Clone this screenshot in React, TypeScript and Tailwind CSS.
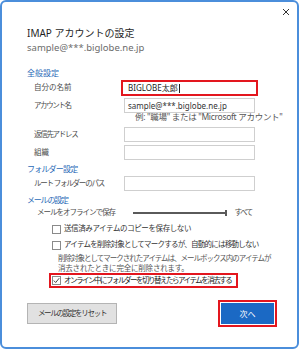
import { ReactNode } from "react"

// IMAP account settings dialog

const font = "font-['Noto_Sans','Noto_Sans_CJK_JP',sans-serif]"

function Row({ label, children, className = "", labelClass = "tracking-[-1px]" }: { label: string; children: ReactNode; className?: string; labelClass?: string }) {
  return (
    <div className={`flex items-center ${className}`}>
      <div className={`w-[97px] shrink-0 pl-[7px] text-[7.5px] text-[#4d4d4d] leading-none whitespace-nowrap ${labelClass}`}>{label}</div>
      {children}
    </div>
  )
}

function Input({ value = "" }: { value?: string }) {
  return (
    <div className="w-[131px] h-full border border-[#cfcfcf] bg-white flex items-center px-[3px] text-[8px] text-[#333] leading-none">
      {value}
    </div>
  )
}

function Section({ children, className = "" }: { children: ReactNode; className?: string }) {
  return <div className={`h-[14px] flex items-center text-[8px] text-[#2a6ab7] leading-none ${className}`}>{children}</div>
}

function Check({ checked = false }: { checked?: boolean }) {
  return (
    <span className="w-[9px] h-[9px] border border-[#8a8a8a] bg-white flex items-center justify-center shrink-0">
      {checked && (
        <svg width="7" height="7" viewBox="0 0 7 7">
          <path d="M0.8 3.6 L2.7 5.5 L6.2 1.2" fill="none" stroke="#333" strokeWidth="0.9" />
        </svg>
      )}
    </span>
  )
}

export default function App() {
  return (
    <div className={`w-[300px] h-[351px] bg-white ${font}`}>
      <div className="w-[299px] h-[349px] border-2 border-[#4b8edb] rounded-[6px] relative pl-[25px] pt-[23px]">
        {/* close */}
        <svg className="absolute top-[6px] right-[7px]" width="8" height="8" viewBox="0 0 8 8">
          <path d="M1 1 L7 7 M7 1 L1 7" stroke="#333" strokeWidth="1" />
        </svg>

        <div className="h-[16px] flex items-center text-[10px] text-[#1f1f1f] leading-none">
          IMAP アカウントの設定
        </div>
        <div className="h-[13px] flex items-center text-[9.5px] text-[#6b6b6b] leading-none">sample@***.biglobe.ne.jp</div>

        <Section className="mt-[12px]">全般設定</Section>
        <Row label="自分の名前" className="h-[16px]" labelClass="">
          <div className="-ml-[3px] w-[137px] h-full border-2 border-[#e3161e] bg-white flex items-center px-[5px] text-[8px] text-[#222] leading-none">
            BIGLOBE太郎<span className="w-px h-[9px] bg-[#222] ml-px" />
          </div>
        </Row>
        <Row label="アカウント名" className="h-[15px] mt-[2px]" labelClass="tracking-[-1.4px]">
          <Input value="sample@***.biglobe.ne.jp" />
        </Row>
        <div className="h-[9px] pl-[108px] flex items-center text-[8.5px] text-[#555] leading-none whitespace-nowrap tracking-[-0.3px]">
          例: "職場" または "Microsoft アカウント"
        </div>
        <Row label="返信先アドレス" className="h-[15px] mt-[5px]" labelClass="tracking-[-1.3px]">
          <Input />
        </Row>
        <Row label="組織" className="h-[15px] mt-[3px]" labelClass="">
          <Input />
        </Row>

        <Section className="mt-[2px] tracking-[-0.8px]">フォルダー設定</Section>
        <Row label="ルート フォルダーのパス" className="h-[15px]" labelClass="tracking-[-1.2px]">
          <Input />
        </Row>

        <Section className="mt-[2px] tracking-[-1.2px]">メールの設定</Section>
        <div className="h-[12px] flex items-center text-[7.5px] text-[#4d4d4d] leading-none whitespace-nowrap">
          <div className="w-[106px] shrink-0 pl-[10px] tracking-[-1px]">メールをオフラインで保存</div>
          <div className="w-[92px] h-[1.5px] bg-[#5a5a5a]" />
          <div className="w-[1.5px] h-[6px] bg-[#5a5a5a]" />
          <div className="ml-[8px] tracking-[-1.5px]">すべて</div>
        </div>

        <div className="h-[12px] mt-[4px] pl-[25px] flex items-center gap-[2px] text-[7.5px] text-[#333] leading-none whitespace-nowrap">
          <Check />
          <span className="ml-[1px] tracking-[-0.4px]">送信済みアイテムのコピーを保存しない</span>
        </div>
        <div className="h-[12px] mt-[4px] pl-[25px] flex items-center gap-[2px] text-[7.5px] text-[#333] leading-none whitespace-nowrap">
          <Check />
          <span className="ml-[1px] tracking-[-0.75px]">アイテムを削除対象としてマークするが、自動的には移動しない</span>
        </div>
        <div className="mt-[2px] pl-[31px] text-[7.5px] leading-[10px] text-[#555] whitespace-nowrap">
          <div className="tracking-[-1px]">削除対象としてマークされたアイテムは、メールボックス内のアイテムが</div>
          <div className="tracking-[-0.2px]">消去されたときに完全に削除されます。</div>
        </div>
        <div className="ml-[22px] w-[189px] h-[15px] border-2 border-[#e3161e] flex items-center pl-[1px] gap-[2px] text-[7.5px] text-[#222] leading-none whitespace-nowrap">
          <Check checked />
          <span className="ml-[1px] tracking-[-1.5px]">オンライン中にフォルダーを切り替えたらアイテムを消去する</span>
        </div>

        <div className="mt-[12px] h-[27px] flex items-center justify-between pr-[20px]">
          <button className="w-[90px] h-[21px] bg-[#e1e1e1] border border-[#b4b4b4] text-[7.5px] text-[#333] leading-none tracking-[-1.3px]">
            メールの設定をリセット
          </button>
          <div className="w-[59px] h-[27px] border-2 border-[#e3161e] bg-white p-px flex">
            <button className="flex-1 bg-[#1b69c4] text-white text-[8px] leading-none">次へ</button>
          </div>
        </div>
      </div>
    </div>
  )
}
